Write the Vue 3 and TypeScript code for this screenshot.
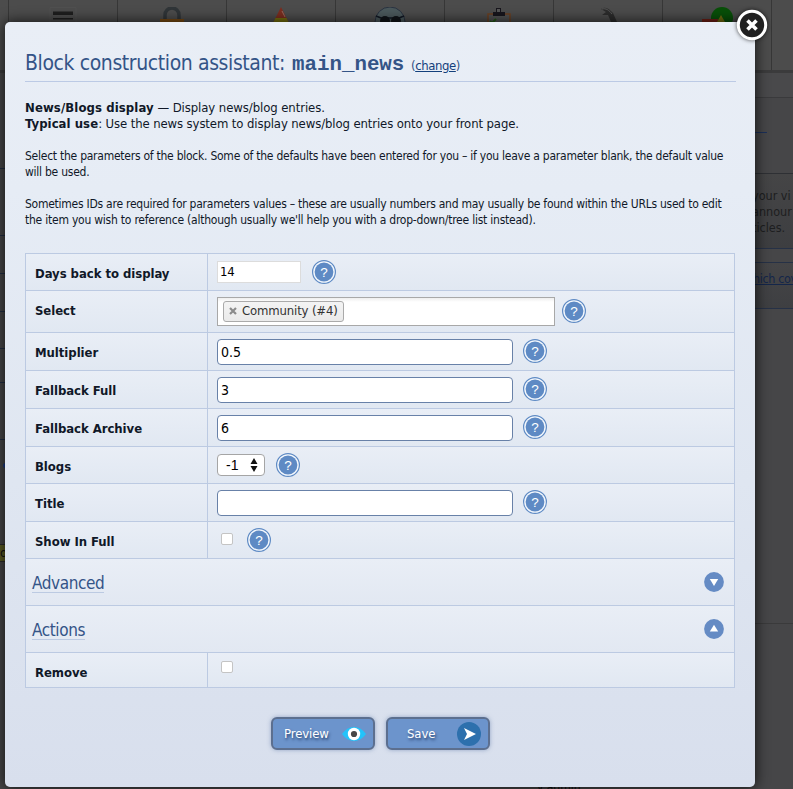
<script setup lang="ts">
interface Field {
  label: string
  kind: 'short' | 'tags' | 'text' | 'select' | 'check'
  value?: string
  size: string
  help: boolean
}

const fields: Field[] = [
  { label: 'Days back to display', kind: 'short', value: '14', size: 'h37', help: true },
  { label: 'Select', kind: 'tags', value: 'Community (#4)', size: 'h42', help: true },
  { label: 'Multiplier', kind: 'text', value: '0.5', size: 'h38', help: true },
  { label: 'Fallback Full', kind: 'text', value: '3', size: 'h38', help: true },
  { label: 'Fallback Archive', kind: 'text', value: '6', size: 'h38', help: true },
  { label: 'Blogs', kind: 'select', value: '-1', size: 'h37', help: true },
  { label: 'Title', kind: 'text', value: '', size: 'h38', help: true },
  { label: 'Show In Full', kind: 'check', size: 'h37', help: true },
]
</script>

<template>
  <div class="stage">
    <div class="page">
      <div class="toolbar">
        <div class="tool first"></div>
        <div class="tool">
          <svg width="28" height="28" viewBox="0 0 28 28"><path d="M1 0.5H27V28H1z" fill="none" stroke="#555" stroke-width=".5"/><path d="M4 4.5h20v3.5H4zM4 11h20v1.5H4zM4 15h20v3H4z" fill="#1e1e1e"/></svg>
        </div>
        <div class="tool">
          <svg width="28" height="28" viewBox="0 0 28 28"><path d="M7 14V8a7 7 0 0 1 14 0v6" fill="none" stroke="#303538" stroke-width="3.5"/><path d="M2 12h24v14H2z" fill="#7a4b13"/></svg>
        </div>
        <div class="tool">
          <svg width="28" height="28" viewBox="0 0 28 28"><path d="M14 0L24 20H4z" fill="#7c2d1f"/><path d="M8.5 11h11L24 20H4z" fill="#77710e"/><path d="M15 4l3 6" stroke="#946a5e"/></svg>
        </div>
        <div class="tool">
          <svg width="32" height="28" viewBox="0 0 32 28"><circle cx="16" cy="15" r="15" fill="#4b595c" stroke="#2a3341"/><path d="M2 9l5 2h18l5-2" stroke="#111722" stroke-width="1.5" fill="none"/><circle cx="11" cy="14" r="5" fill="#101418"/><circle cx="22" cy="14" r="5" fill="#101418"/></svg>
        </div>
        <div class="tool">
          <svg width="28" height="28" viewBox="0 0 28 28"><path d="M3 7h22v20H3z" fill="#505152" stroke="#6b3f20" stroke-width="1.5"/><path d="M8 5h3V1h5v4h4v4H8z" fill="#17151c"/><path d="M12 2h3v3h-3z" fill="#555"/><path d="M5 14l2 2 4-4" stroke="#235916" stroke-width="2" fill="none"/></svg>
        </div>
        <div class="tool">
          <svg width="28" height="28" viewBox="0 0 28 28"><path d="M7 2c5-3 8 0 12 4l4 9-5 2-4-9H8l4-3z" fill="#2c2c2c"/><path d="M8 2c4-1 7 1 10 5" stroke="#5c5c5c" fill="none"/></svg>
        </div>
        <div class="tool">
          <svg width="32" height="28" viewBox="0 0 32 28"><circle cx="21" cy="11" r="11" fill="#085008"/><path d="M1 12h16v10H1z" fill="#702015"/><path d="M20 8l8 14H12z" fill="#706a0e"/></svg>
        </div>
        <div class="tool last"></div>
      </div>
      <div class="page-body">
        <div class="strip">
          <div class="s s1"></div>
          <div class="s s2"></div>
          <div class="s s3"></div>
          <div class="s s4"></div>
          <div class="s s5"></div>
          <div class="s s6"></div>
          <div class="s s7"></div>
          <div class="dot"></div>
          <div class="mark">o</div>
        </div>
        <div class="aside">
          <div class="crumb"></div>
          <div class="heading-line"></div>
          <div class="notice">your vi<br>annour<br>ticles.</div>
          <div class="linkbox"><span>hich cov</span></div>
          <div class="rest"></div>
        </div>
      </div>
      <div class="footer-text">y admin</div>
    </div>

    <div class="dialog">
      <h1><span class="name">Block construction assistant:</span> <code>main_news</code> <span class="change">(<a>change</a>)</span></h1>
      <div class="intro">
        <div><b class="b1">News/Blogs display</b> — Display news/blog entries.</div>
        <div class="i2"><b class="b2">Typical use</b>: Use the news system to display news/blog entries onto your front page.</div>
      </div>
      <div class="para">Select the parameters of the block. Some of the defaults have been entered for you – if you leave a parameter blank, the default value<br>will be used.</div>
      <div class="para">Sometimes IDs are required for parameters values – these are usually numbers and may usually be found within the URLs used to edit<br><span class="p4">the item you wish to reference (although usually we'll help you with a drop-down/tree list instead).</span></div>

      <div class="table">
        <div v-for="f in fields" :key="f.label" class="row" :class="f.size">
          <div class="label">{{ f.label }}</div>
          <div class="cell" :class="'c-' + f.kind">
            <div v-if="f.kind === 'short'" class="short">{{ f.value }}</div>
            <div v-else-if="f.kind === 'tags'" class="tags">
              <span class="tag">
                <svg width="8" height="8" viewBox="0 0 8 8"><path d="M1 1l6 6M7 1L1 7" stroke="#8b8b8b" stroke-width="2.2"/></svg>
                {{ f.value }}
              </span>
            </div>
            <div v-else-if="f.kind === 'text'" class="text">{{ f.value }}</div>
            <div v-else-if="f.kind === 'select'" class="select">
              {{ f.value }}
              <svg width="8" height="14" viewBox="0 0 8 14"><path d="M4 0l3.5 6h-7zM4 14l3.5-6h-7z" fill="#111"/></svg>
            </div>
            <div v-else class="check"></div>
            <svg v-if="f.help" class="help" width="24" height="24" viewBox="0 0 24 24">
              <circle cx="12" cy="12" r="11.4" fill="#f4f8fd" stroke="#5e8ac4" stroke-width="1.2"/>
              <circle cx="12" cy="12" r="9.4" fill="#5e8ac4"/>
              <text x="12" y="16.8" text-anchor="middle" class="q">?</text>
            </svg>
          </div>
        </div>
        <div class="section">
          <span>Advanced</span>
          <svg width="20" height="20" viewBox="0 0 20 20"><circle cx="10" cy="10" r="9.9" fill="#658bc4"/><path d="M5.8 7h8.4L10 14z" fill="#fff"/></svg>
        </div>
        <div class="section">
          <span>Actions</span>
          <svg width="20" height="20" viewBox="0 0 20 20"><circle cx="10" cy="10" r="9.9" fill="#658bc4"/><path d="M5.8 12.5h8.4L10 5.7z" fill="#fff"/></svg>
        </div>
        <div class="row h35">
          <div class="label">Remove</div>
          <div class="cell c-last"><div class="check"></div></div>
        </div>
      </div>

      <div class="buttons">
        <div class="btn preview"><span>Preview</span>
          <svg width="24" height="16" viewBox="0 0 24 16"><path d="M0 8Q5 1 12 1t12 7q-5 7-12 7T0 8z" fill="#22c3fa"/><circle cx="12" cy="8" r="6.2" fill="#fff"/><circle cx="12" cy="8" r="3.1" fill="#474747"/></svg>
        </div>
        <div class="btn save"><span>Save</span>
          <svg width="24" height="24" viewBox="0 0 24 24"><circle cx="12" cy="12" r="12" fill="#2d70ad"/><path d="M7 6l12 6-12 6 3-6z" fill="#fff"/></svg>
        </div>
      </div>
    </div>

    <svg class="close" width="38" height="38" viewBox="0 0 38 38">
      <circle cx="19" cy="19" r="13.7" fill="#202020" stroke="#fff" stroke-width="3"/>
      <path d="M14.5 14.5l9 9M23.5 14.5l-9 9" stroke="#fff" stroke-width="3.6"/>
    </svg>
  </div>
</template>

<style>
body { background: #464648; overflow: hidden; }
</style>

<style scoped>
* { box-sizing: border-box; }
.stage { position: relative; width: 793px; height: 789px; overflow: hidden; font-family: "DejaVu Sans Condensed", "DejaVu Sans", sans-serif; font-stretch: condensed; color: #101828; white-space: nowrap; }
.page { height: 789px; background: #464648; display: flex; flex-direction: column; }
.toolbar { flex: none; height: 73px; display: flex; background: linear-gradient(#4c4c4c, #4c4c4c); border-bottom: 3px solid #3b3b3c; }
.tool { width: 109px; border-right: 1px solid #373737; display: flex; justify-content: center; padding-top: 7px; flex: none; }
.tool.first { width: 9px; }
.tool.last { border: 0; width: 21px; }
.page-body { height: 711px; display: flex; justify-content: space-between; flex: none; }
.strip { width: 5px; overflow: hidden; }
.s { border-bottom: 1px solid #222d42; }
.s1 { height: 96px; }
.s2 { height: 67px; }
.s3, .s4 { height: 38px; }
.s5 { height: 37px; }
.s6 { height: 34px; }
.s7 { height: 57px; }
.dot { width: 3px; height: 5px; margin: 23px 0 0 3px; border-radius: 3px 0 0 3px; background: #1c3c88; }
.mark { margin-top: 76px; height: 18px; background: #5c5c23; border: solid #2c2c2c; border-width: 1px 0; color: #111; font-size: 13px; line-height: 16px; }
.aside { width: 39px; font-size: 12.5px; line-height: 16px; color: #1d1e20; }
.crumb { height: 25px; border-bottom: 1px solid #3a3a3c; background: #49494b; }
.heading-line { width: 13px; height: 35px; border-bottom: 1px solid #1b2f58; margin-bottom: 40px; }
.notice { height: 76px; margin-left: -2px; padding-top: 14px; border-top: 1px solid #2e3034; border-bottom: 1px solid #263146; background: linear-gradient(#454546, #3d3e41); overflow: hidden; }
.linkbox { margin-top: 13px; height: 47px; padding-top: 8px; border-top: 1px solid #263146; border-bottom: 1px solid #263146; background: linear-gradient(#454547, #3e3f42); color: #14264a; overflow: hidden; }
.linkbox span { text-decoration: underline; margin-left: -1px; letter-spacing: -.4px; }
.rest { height: 315px; border-bottom: 1px solid #3a3a3b; }
.footer-text { padding-left: 537px; margin-top: -3px; font-size: 12px; line-height: 12px; color: #111; }

.dialog { position: absolute; left: 5px; top: 22px; width: 750px; height: 765px; padding: 0 20px; border-radius: 5px; background: linear-gradient(#e9eef6, #e6ecf5 22%, #dfe6f1 60%, #d8dfed); box-shadow: 0 0 13px 1px rgba(0, 0, 0, .7); }
h1 { margin: 0; height: 60px; width: 711px; padding-top: 29px; border-bottom: 1px solid #bccae5; font-weight: 400; font-size: 21px; line-height: 25px; color: #345487; display: flex; align-items: baseline; }
h1 .name { letter-spacing: -.4px; width: 267px; }
h1 code { font: bold 20.8px/20px "Liberation Mono", monospace; width: 119px; }
.change { font-size: 13px; letter-spacing: -.4px; }
.change a { color: #14407c; text-decoration: underline; }
.intro { padding-top: 18px; font-size: 13px; line-height: 16px; letter-spacing: -.08px; }
.i2 { letter-spacing: -.11px; }
.b1 { letter-spacing: .1px; }
.b2 { letter-spacing: .05px; }
.para { font-size: 12px; line-height: 16px; margin-top: 16px; letter-spacing: -.25px; }
.p4 { letter-spacing: -.23px; }
.table { width: 710px; margin-top: 25px; border: 1px solid #bccae2; border-top: 0; }
.row { display: flex; background: linear-gradient(#e9eef6, #e1e8f2); border-top: 1px solid #bccae2; }
.h37 { height: 37px; }
.h38 { height: 38px; }
.h42 { height: 42px; }
.h35 { height: 35px; }
.label { width: 182px; padding-left: 9px; padding-top: 11px; line-height: 17px; font-size: 13px; font-weight: 700; letter-spacing: -.05px; border-right: 1px solid #bccae2; }
.cell { display: flex; align-items: flex-start; padding: 6px 0 0 9px; }
.help { margin-left: 10px; flex: none; }
.q { font: 13.5px "Liberation Sans", sans-serif; fill: #fff; }
.short { margin-top: 1px; width: 84px; height: 22px; border: 1px solid #dcdcdc; background: #fff; font-size: 13px; line-height: 20px; padding-left: 2px; margin-right: 1px; letter-spacing: -.2px; color: #000; }
.tags { width: 338px; height: 29px; border: 1px solid #a8a8a8; background: linear-gradient(#eee, #fff 15%); padding: 3px 5px; margin-right: -3px; }
.c-tags .help { margin-top: 2px; }
.tag { display: flex; align-items: center; width: 121px; height: 21px; border: 1px solid #aaa; border-radius: 3px; background: linear-gradient(#f4f4f4, #eaeaea); color: #333; font-size: 13px; line-height: 16px; padding: 0 0 1px 5px; gap: 5px; letter-spacing: -.15px; }
.text { width: 296px; height: 26px; border: 1px solid #6881a8; border-radius: 4px; background: #fff; font-size: 14px; line-height: 25px; padding-left: 3px; color: #000; }
.select { width: 48px; height: 22px; margin-top: 1px; border: 1px solid #a5a5a5; border-radius: 4px; background: #fff; color: #000; font: 14px/20px "Liberation Sans", sans-serif; padding: 0 6px 0 8px; display: flex; align-items: center; justify-content: space-between; margin-right: 1px; }
.check { width: 12px; height: 12px; margin: 5px 4px 0 4px; border: 1px solid #c4c4c4; border-radius: 2px; background: #fff; }
.c-last .check { margin-top: 2px; }
.section { height: 47px; border-top: 1px solid #bccae2; background: linear-gradient(#e9eef6, #e2e8f2); display: flex; justify-content: space-between; padding: 13px 10px 0 6px; color: #345487; font-size: 17px; }
.section span { height: 21px; line-height: 23px; border-bottom: 1px solid #bccae2; letter-spacing: -.4px; }
.buttons { display: flex; justify-content: center; gap: 11px; margin-top: 29px; padding-left: 1px; }
.btn { width: 104px; height: 33px; border: 2px solid #5c6f8f; border-radius: 6px; background: #6c94cc; box-shadow: 0 0 4px rgba(80, 110, 160, .5); color: #fff; font-size: 13px; letter-spacing: -.1px; text-shadow: 1px 2px 3px #223b68; display: flex; align-items: center; justify-content: space-between; }
.preview { padding: 0 7px 0 11px; }
.save { padding: 0 7px 0 19px; }
.close { position: absolute; left: 733px; top: 6px; filter: drop-shadow(0 0 2px rgba(0, 0, 0, .7)); }
</style>
